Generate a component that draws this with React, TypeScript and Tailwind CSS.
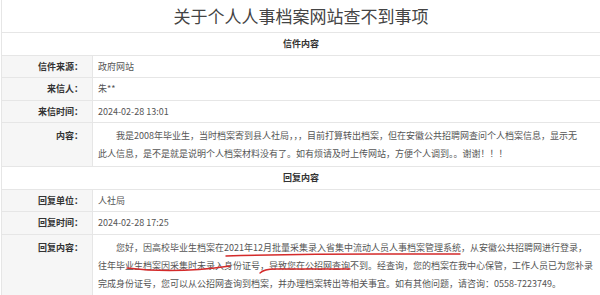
import React from "react";

const font = { fontFamily: '"Noto Sans CJK SC", "Noto Sans", sans-serif' };

function Row({ label, h, children, top }: { label: string; h: string; children: React.ReactNode; top?: boolean }) {
  return (
    <div className={`flex border-b border-[#e6e6e6] ${h}`}>
      <div
        className={`w-[91px] shrink-0 bg-[#f6f6f6] border-r border-[#e6e6e6] pr-[9px] text-right font-bold text-[#333] text-[9px] leading-[18px] flex justify-end ${top ? "items-start pt-[4px]" : "items-center"}`}
      >
        {label}
      </div>
      <div className={`flex-1 pl-[5px] text-[9px] leading-[18px] text-[#555] flex ${top ? "items-start pt-[4px]" : "items-center"}`}>
        {children}
      </div>
    </div>
  );
}

function Header({ text, h }: { text: string; h: string }) {
  return (
    <div className={`flex items-center justify-center border-b border-[#e6e6e6] font-bold text-[9px] text-[#333] ${h}`}>
      {text}
    </div>
  );
}

export default function App() {
  return (
    <div className="relative w-[600px] h-[295px] overflow-hidden bg-white" style={font}>
      <div className="ml-[1px] border-l border-[#e6e6e6] h-full">
        <div className="h-[33px] border-b border-[#e6e6e6] flex items-center justify-center text-[17px] text-[#444] pb-[1px]">
          关于个人人事档案网站查不到事项
        </div>
        <Header text="信件内容" h="h-[23px]" />
        <Row label="信件来源：" h="h-[22px]">政府网站</Row>
        <Row label="来信人：" h="h-[23px]">朱**</Row>
        <Row label="来信时间：" h="h-[22px]">2024-02-28 13:01</Row>
        <Row label="内容：" h="h-[44px]" top>
          <div className="whitespace-nowrap">
            <div className="indent-[18px]">我是2008年毕业生，当时档案寄到县人社局，，，目前打算转出档案，但在安徽公共招聘网查问个人档案信息，显示无</div>
            <div>此人信息，是不是就是说明个人档案材料没有了。如有烦请及时上传网站，方便个人调到。。谢谢！！！</div>
          </div>
        </Row>
        <Header text="回复内容" h="h-[23px]" />
        <Row label="回复单位：" h="h-[22px]">人社局</Row>
        <Row label="回复时间：" h="h-[23px]">2024-02-28 17:25</Row>
        <Row label="回复内容：" h="h-[80px]" top>
          <div className="whitespace-nowrap">
            <div className="indent-[18px]">您好，因高校毕业生档案在2021年12月批量采集录入省集中流动人员人事档案管理系统，从安徽公共招聘网进行登录，</div>
            <div>往年毕业生档案因采集时未录入身份证号，导致您在公招网查询不到。经查询，您的档案在我中心保管，工作人员已为您补录</div>
            <div>完成身份证号，您可以从公招网查询到档案，并办理档案转出等相关事宜。如有其他问题，请咨询：0558-7223749。</div>
          </div>
        </Row>
      </div>
      <svg className="absolute inset-0 pointer-events-none" width="600" height="295" viewBox="0 0 600 295">
        <g fill="none" stroke="#d42a2a" strokeWidth="1.4" strokeLinecap="round">
          <path d="M226 256 Q 300 254 380 254 T 460 254" />
          <path d="M127 268 Q 175 274 230 266" />
          <path d="M260 273 Q 264 269 275 269 L 350 269" />
        </g>
      </svg>
    </div>
  );
}
